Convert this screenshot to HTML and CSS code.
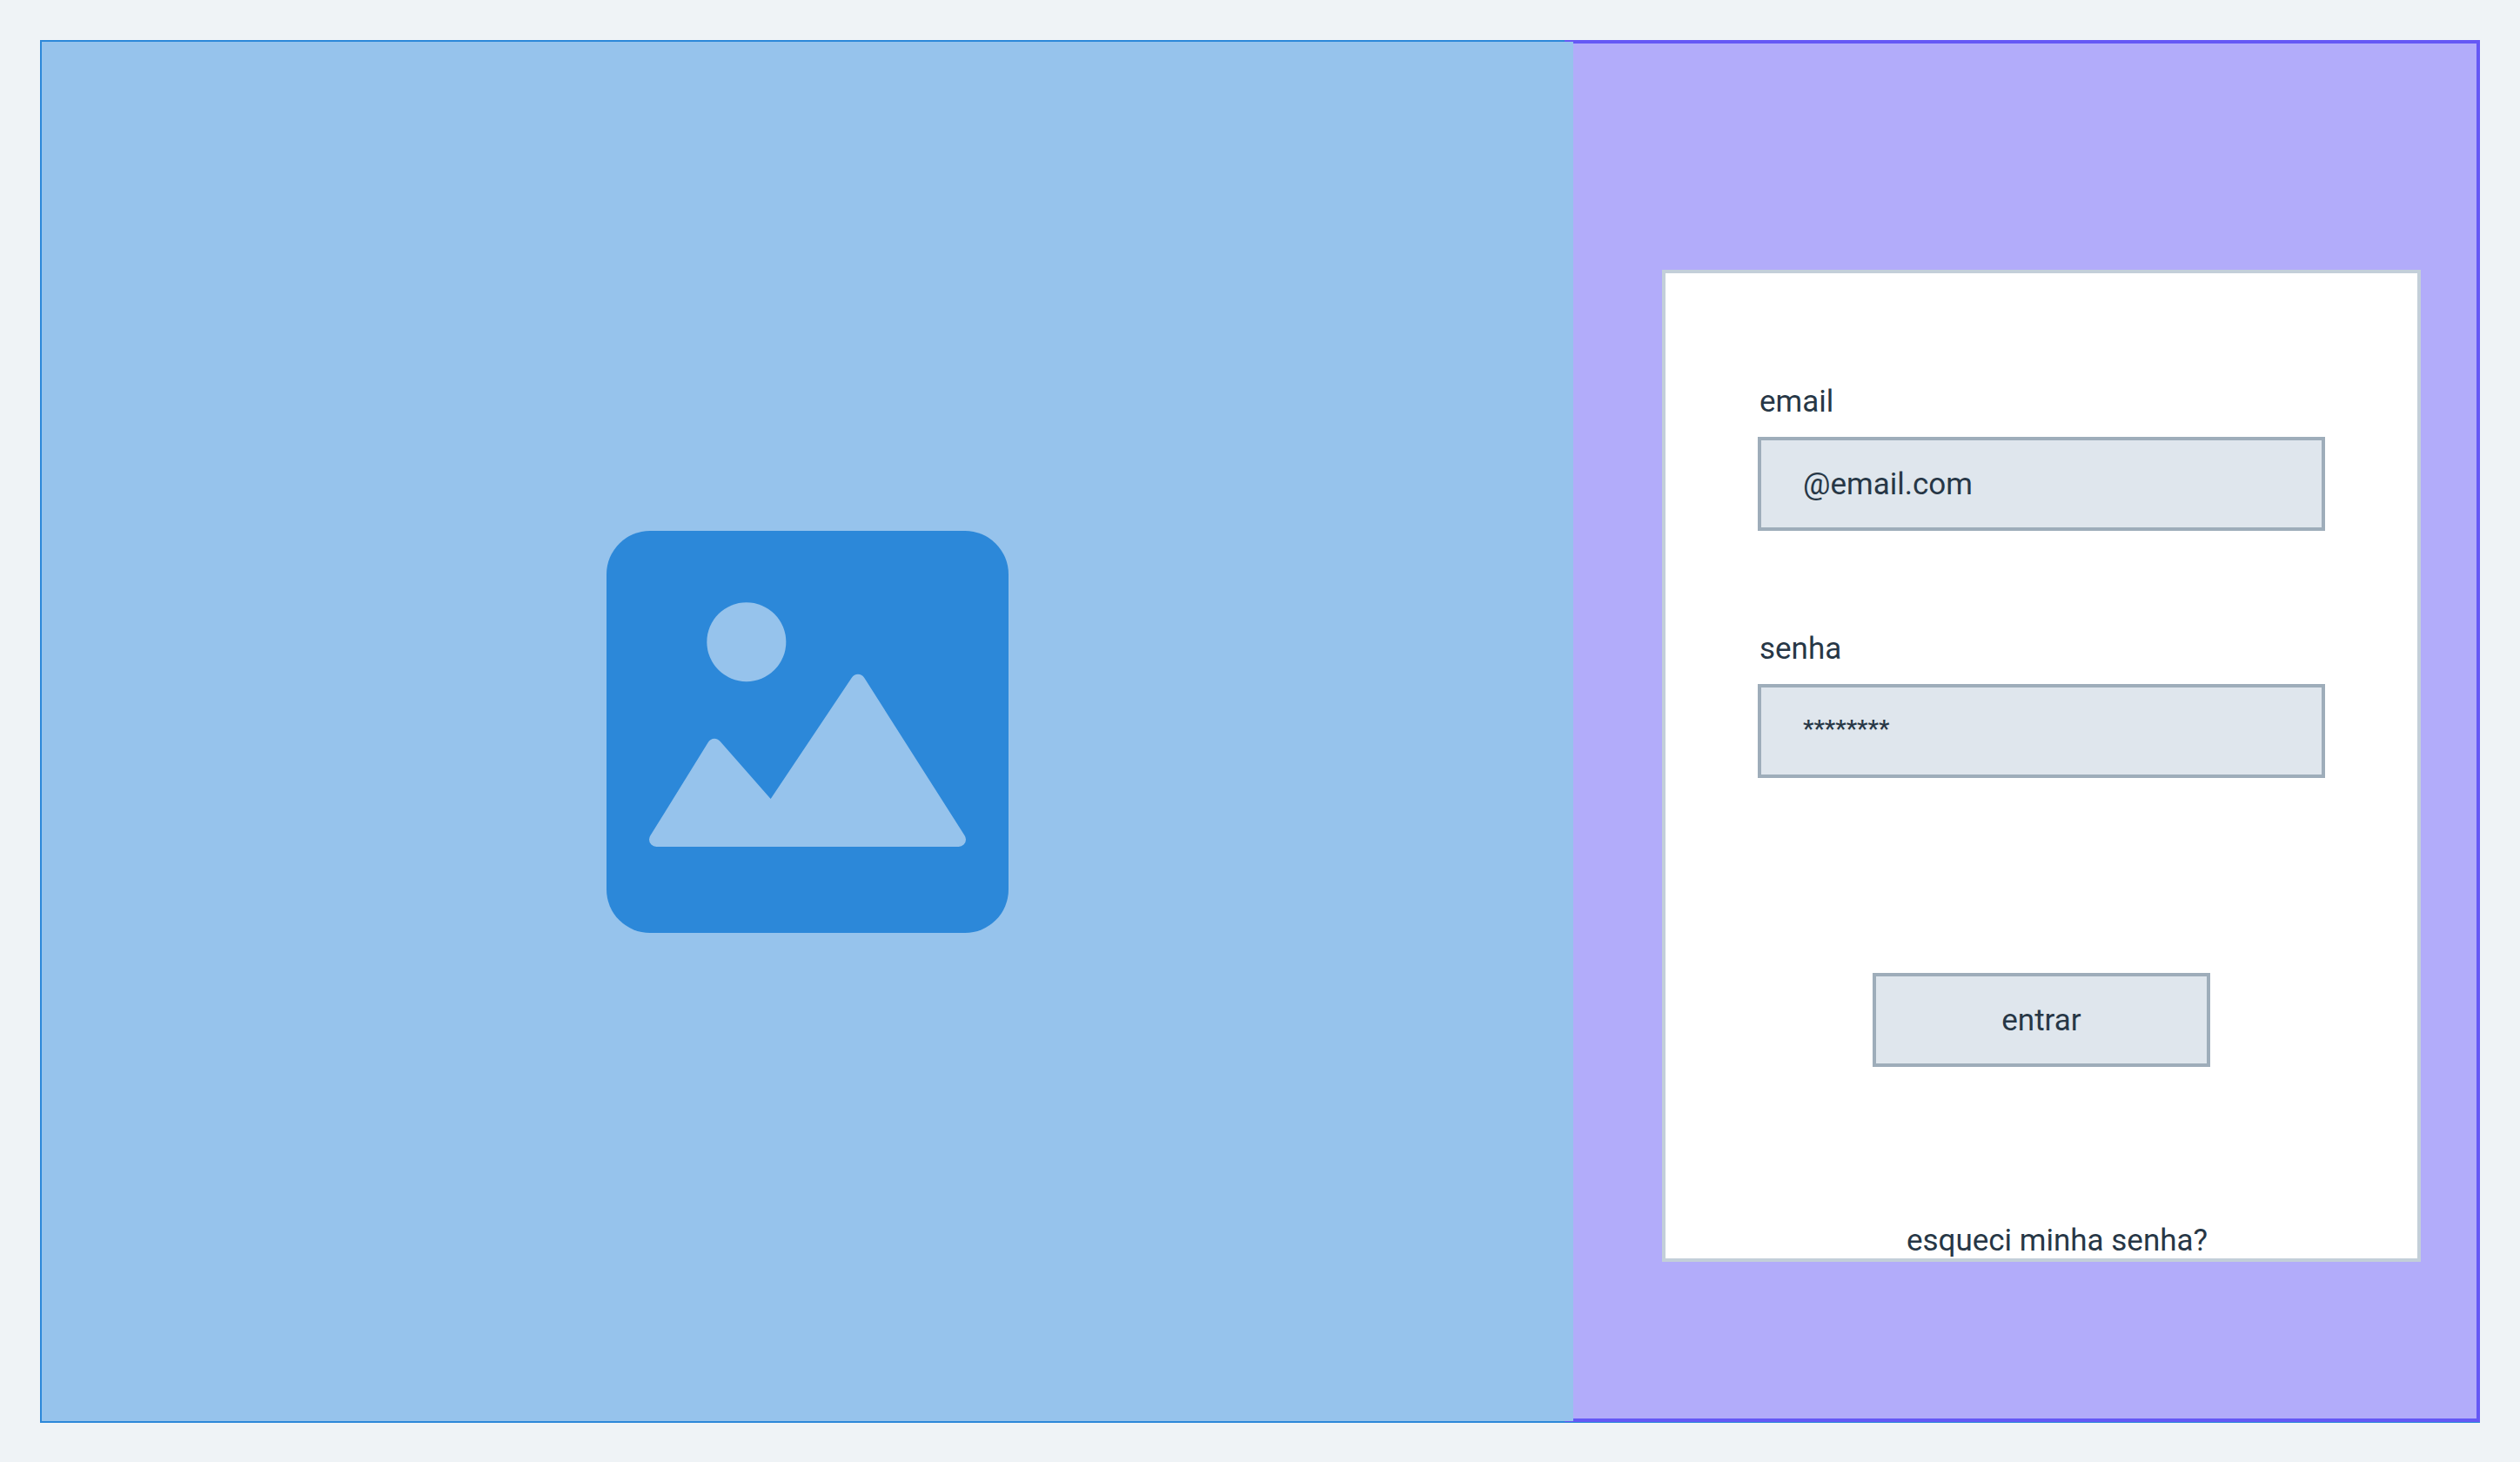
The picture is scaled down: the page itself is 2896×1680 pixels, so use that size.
FILE: index.html
```html
<!DOCTYPE html>
<html lang="pt-BR">
<head>
  <meta charset="utf-8">
  <meta name="viewport" content="width=device-width, initial-scale=1">
  <title>Entrar</title>
  <link rel="stylesheet" href="styles.css">
</head>
<body>
  <main class="page">
    <section class="media">
      <div class="media-fill">
        <svg class="media-icon" viewBox="51 57 1386 1386" aria-hidden="true">
          <rect class="icon-frame" x="51" y="57" width="1386" height="1386" rx="150"/>
          <circle class="icon-shape" cx="533.5" cy="440" r="136.5"/>
          <path class="icon-shape" d="M401 787Q409 773.500 423 773.500Q435 773.500 445 785L617 981L896 564Q905 551.500 918 551.500Q931 551.500 940 564L1286 1108Q1290 1115 1290 1121A25 25 0 0 1 1265 1146H223A25 25 0 0 1 198 1121Q198 1115 202 1108Z"/>
        </svg>
      </div>
    </section>
    <section class="panel">
      <form class="card">
        <div class="field">
          <label class="label" for="email">email</label>
          <input class="box input" id="email" type="email" placeholder="@email.com">
        </div>
        <div class="field">
          <label class="label" for="senha">senha</label>
          <input class="box input input-password" id="senha" type="password" placeholder="********">
        </div>
        <button class="box submit" type="button">entrar</button>
        <a class="forgot" href="#">esqueci minha senha?</a>
      </form>
    </section>
  </main>
</body>
</html>
```
FILE: styles.css
```css
* {
  box-sizing: border-box;
}

body {
  margin: 0;
  background: #eff3f6;
  color: #273746;
  font-family: Roboto, "Liberation Sans", sans-serif;
  font-size: 35px;
  line-height: 40px;
}

.page {
  display: grid;
  grid-template-columns: 438fr 263fr;
  min-height: 100vh;
  padding: 46px;
}

.media {
  position: relative;
  z-index: 1;
  display: grid;
  border: 2px solid #2c88d9;
  border-right: 0;
}

/* The picture area laps over the edge of the login panel. */
.media-fill {
  display: grid;
  place-items: center;
  margin-right: -10px;
  background: #96c3ec;
}

.media-icon {
  display: block;
  width: 462px;
  height: 462px;
}

.icon-frame {
  fill: #2c88d9;
}

.icon-shape {
  fill: #96c3ec;
}

.panel {
  display: grid;
  align-items: start;
  margin-bottom: 1px;
  padding: 260px 64px 180px 108px;
  border: 4px solid #6558f5;
  background: #b2acfa;
  box-shadow: 0 1px 0 #2c88d9;
}

.card {
  display: flex;
  flex-direction: column;
  padding: 128px 106px 0;
  border: 4px solid #c3cfd9;
  background: #fff;
}

.field {
  display: flex;
  flex-direction: column;
  gap: 20px;
}

.field + .field {
  margin-top: 116px;
}

.label {
  padding-left: 2px;
}

.box {
  height: 108px;
  border: 4px solid #9eadba;
  border-radius: 0;
  background: #dfe6ed;
  color: inherit;
  font: inherit;
}

.input {
  width: 100%;
  padding: 0 48px;
}

.input::placeholder {
  color: inherit;
  opacity: 1;
}

.input-password {
  padding-bottom: 6px;
  font-size: 28px;
  font-weight: 500;
}

.submit {
  align-self: center;
  width: 388px;
  margin-top: 224px;
  padding: 2px 0 0;
}

.forgot {
  align-self: center;
  margin-top: 180px;
  padding-left: 36px;
  color: inherit;
  text-decoration: none;
}
```
